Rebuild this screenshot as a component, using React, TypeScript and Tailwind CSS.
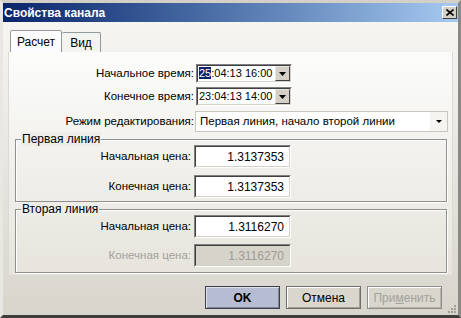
import { ReactNode } from "react";

const font = { fontFamily: '"Liberation Sans", Arial, sans-serif' };

function Sunken({ children, className = "" }: { children: ReactNode; className?: string }) {
    return (
        <div className={`border border-t-[#808080] border-l-[#808080] border-b-white border-r-white ${className}`}>
            <div className="h-full w-full border border-t-[#404040] border-l-[#404040] border-b-[#d4d0c8] border-r-[#d4d0c8]">
                {children}
            </div>
        </div>
    );
}

function DateField({ value, selected }: { value: string; selected?: boolean }) {
    const rest = selected ? value.slice(2) : value;
    return (
        <Sunken className="h-[19px] w-[96px] bg-white">
            <div className="flex h-full items-center justify-between">
                <span className="whitespace-nowrap pl-[1px] text-[11px] leading-none text-black">
                    {selected && <span className="bg-[#0a246a] text-white">{value.slice(0, 2)}</span>}
                    {rest}
                </span>
                <div className="flex h-[15px] w-[15px] shrink-0 items-center justify-center border border-t-[#e8e6e0] border-l-[#e8e6e0] border-b-[#404040] border-r-[#404040] bg-[#d4d0c8]">
                    <svg width="7" height="4" viewBox="0 0 7 4"><path d="M0 0h7L3.5 4z" fill="#000" /></svg>
                </div>
            </div>
        </Sunken>
    );
}

function PriceField({ value, disabled }: { value: string; disabled?: boolean }) {
    return (
        <Sunken className={`h-[23px] w-[97px] ${disabled ? "bg-[#d6d3cb]" : "bg-white"}`}>
            <div className={`flex h-full items-center justify-end pr-[5px] text-[12px] ${disabled ? "text-[#9e9c96]" : "text-black"}`}>
                {value}
            </div>
        </Sunken>
    );
}

function Group({ title, children, className = "" }: { title: string; children: ReactNode; className?: string }) {
    return (
        <div className={`relative border border-[#8f8f8c] shadow-[inset_1px_1px_0_#fff,1px_1px_0_#fff] ${className}`}>
            <span className="absolute left-[5px] top-[-8px] bg-[#eeede8] px-[1px] text-[12px] leading-[14px] text-black">{title}</span>
            {children}
        </div>
    );
}

function Row({ label, children, disabled, labelW }: { label: string; children: ReactNode; disabled?: boolean; labelW: string }) {
    return (
        <div className="flex items-center">
            <div className={`${labelW} whitespace-nowrap text-right text-[11.5px] ${disabled ? "text-[#a3a19b]" : "text-black"}`}>{label}</div>
            {children}
        </div>
    );
}

export default function App() {
    return (
        <div style={font} className="relative h-[318px] w-[461px] overflow-hidden border-[3px] border-t-[#d4d0c8] border-l-[#e9e7e1] border-r-[#8a8984] border-b-[#3f3e3b] bg-gradient-to-b from-[#f8f7f4] to-[#d8d5cd]">
            <div className="flex h-[19px] items-center justify-between bg-gradient-to-r from-[#0a246a] to-[#a6caf0] pl-[1px] pr-[1px]">
                <span className="text-[12px] font-bold text-white">Свойства канала</span>
                <div className="flex h-[13px] w-[15px] items-center justify-center border border-t-white border-l-white border-b-[#404040] border-r-[#404040] bg-[#d4d0c8]">
                    <svg width="8" height="7" viewBox="0 0 8 7"><path d="M0.5 0.5l7 6M7.5 0.5l-7 6" stroke="#000" strokeWidth="1.6" /></svg>
                </div>
            </div>

            <div className="px-[5px] pt-[8px]">
                <div className="flex items-end pl-[2px]">
                    <div className="flex h-[22px] w-[52px] items-center justify-center rounded-t-[2px] border border-b-0 border-[#919b9c] border-t-[#9b9b9b] bg-[#fcfcfe] text-[12px] text-black">
                        Расчет
                    </div>
                    <div className="flex h-[20px] w-[39px] items-center justify-center rounded-t-[2px] border border-l-0 border-b-0 border-[#919b9c] bg-[#f3f3ef] text-[12px] text-black">
                        Вид
                    </div>
                </div>

                <div className="h-[224px] w-[445px] border border-t-0 border-[#dcdad2] bg-gradient-to-b from-[#fcfcfb] to-[#e6e4dc] pt-[12px]">
                    <div className="flex flex-col gap-[4px] pl-[1px]">
                        <Row label="Начальное время:" labelW="w-[185px] pr-[1px]">
                            <div className="ml-[1px]"><DateField value="25:04:13 16:00" selected /></div>
                        </Row>
                        <Row label="Конечное время:" labelW="w-[185px] pr-[1px]">
                            <div className="ml-[1px]"><DateField value="23:04:13 14:00" /></div>
                        </Row>
                        <div className="mt-[1px]">
                            <Row label="Режим редактирования:" labelW="w-[185px] pr-[1px]">
                                <div className="flex h-[21px] w-[253px] items-center justify-between border border-[#c9c7bd] bg-white pl-[4px] text-[11.5px] text-black">
                                    <span className="whitespace-nowrap">Первая линия, начало второй линии</span>
                                    <div className="flex h-full w-[17px] items-center justify-center bg-[#f5f4f0]">
                                        <svg width="6" height="3" viewBox="0 0 6 3"><path d="M0 0h6L3 3z" fill="#000" /></svg>
                                    </div>
                                </div>
                            </Row>
                        </div>
                    </div>

                    <div className="mt-[7px] px-[6px]">
                        <Group title="Первая линия" className="h-[63px] w-[432px]">
                            <div className="flex flex-col gap-[7px] pt-[5px]">
                                <Row label="Начальная цена:" labelW="w-[178px] pr-[3px]"><PriceField value="1.3137353" /></Row>
                                <Row label="Конечная цена:" labelW="w-[178px] pr-[3px]"><PriceField value="1.3137353" /></Row>
                            </div>
                        </Group>
                        <Group title="Вторая линия" className="mt-[7px] h-[64px] w-[432px]">
                            <div className="flex flex-col gap-[6px] pt-[5px]">
                                <Row label="Начальная цена:" labelW="w-[178px] pr-[3px]"><PriceField value="1.3116270" /></Row>
                                <Row label="Конечная цена:" labelW="w-[178px] pr-[3px]" disabled><PriceField value="1.3116270" disabled /></Row>
                            </div>
                        </Group>
                    </div>
                </div>

                <div className="flex justify-end gap-[6px] pr-[11px] pt-[10px]">
                    <button className="h-[23px] w-[75px] border border-[#3c3f4c] bg-[#b6bcd2] text-[12px] font-bold text-black shadow-[inset_1px_1px_0_#dfe2ec,inset_-1px_-1px_0_#7d8397]">OK</button>
                    <button className="h-[23px] w-[75px] border border-[#6f6e69] bg-[#d9d6ce] text-[12px] text-black shadow-[inset_1px_1px_0_#fff,inset_-1px_-1px_0_#a09e97]">Отмена</button>
                    <button className="h-[23px] w-[75px] border border-[#8e8d88] bg-[#d9d6ce] text-[12px] text-[#a3a19b] shadow-[inset_1px_1px_0_#fff,inset_-1px_-1px_0_#b5b3ac]">
                        При<span className="underline">м</span>енить
                    </button>
                </div>
            </div>

            <svg className="absolute bottom-[1px] right-[1px]" width="11" height="11" viewBox="0 0 11 11">
                <g fill="#a09e97">
                    <rect x="8" y="2" width="2" height="2" />
                    <rect x="5" y="5" width="2" height="2" />
                    <rect x="8" y="5" width="2" height="2" />
                    <rect x="2" y="8" width="2" height="2" />
                    <rect x="5" y="8" width="2" height="2" />
                    <rect x="8" y="8" width="2" height="2" />
                </g>
            </svg>
        </div>
    );
}
